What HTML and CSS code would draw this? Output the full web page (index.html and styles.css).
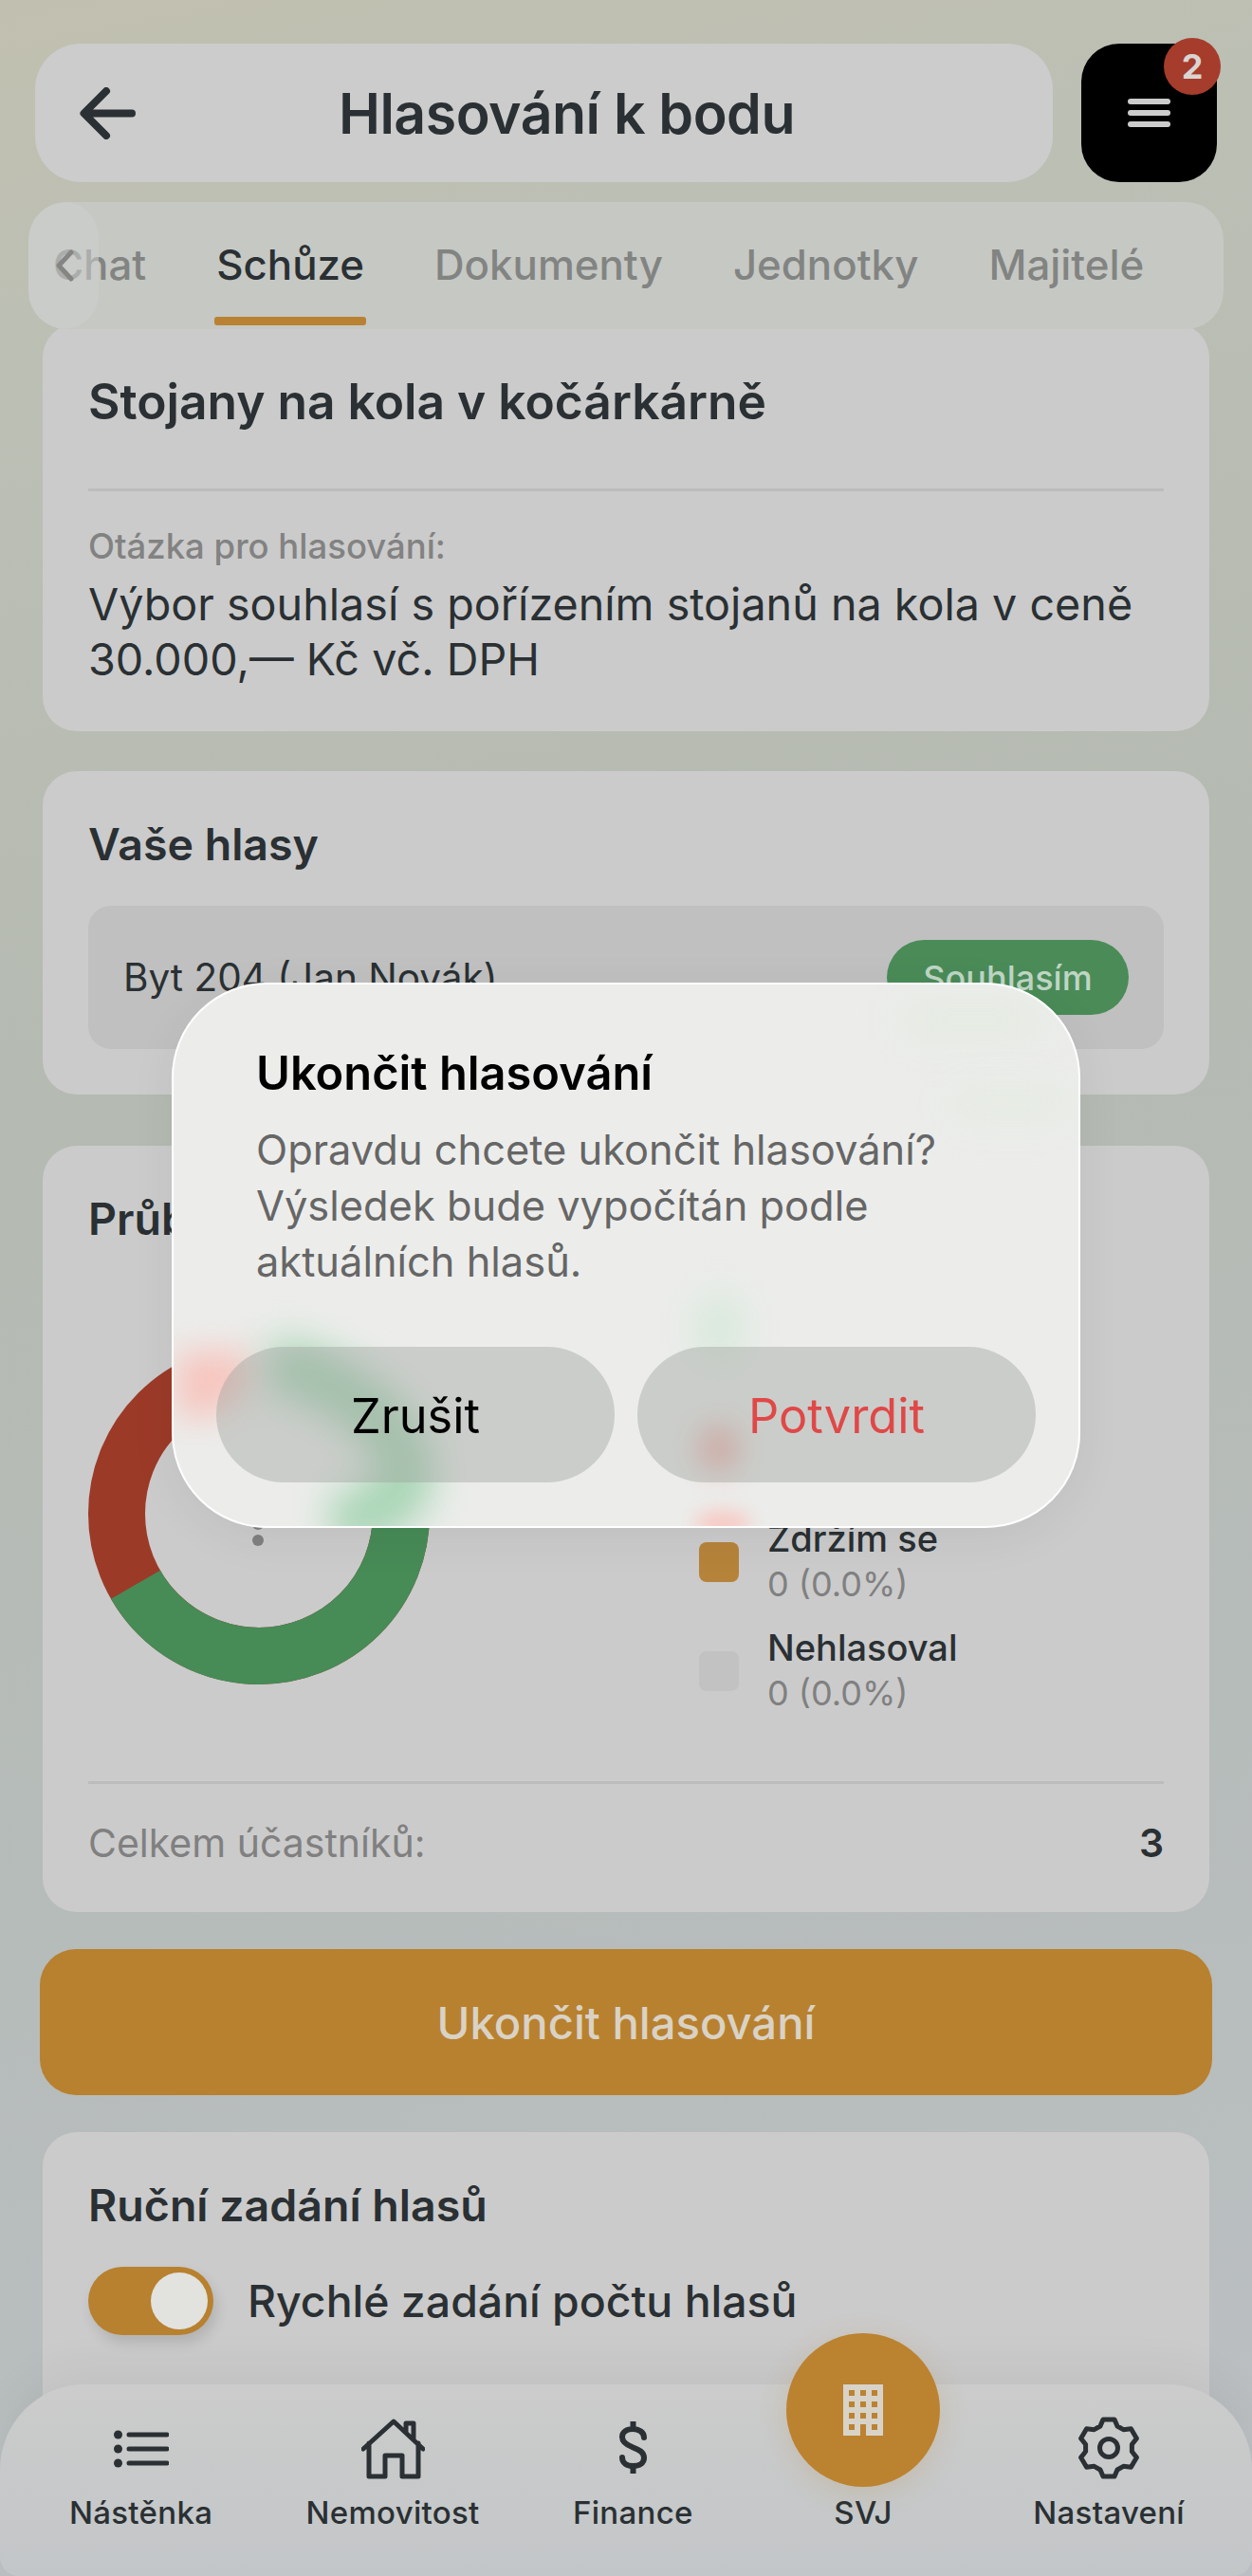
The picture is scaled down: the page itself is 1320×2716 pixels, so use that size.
FILE: index.html
```html
<!DOCTYPE html>
<html lang="cs">
<head>
    <meta charset="UTF-8">
    <meta name="viewport" content="width=device-width, initial-scale=1.0">
    <title>Hlasování k bodu</title>
    <link rel="stylesheet" href="styles.css">
</head>
<body>
<div class="screen">
    <header class="top-bar">
        <div class="title-pill">
            <svg class="back-icon" viewBox="0 0 59 55"><path d="M55 27.500H5M28 4 4.500 27.500 28 51"/></svg>
            <h1>Hlasování k bodu</h1>
        </div>
        <button class="menu-btn">
            <span class="menu-line"></span>
            <span class="menu-line"></span>
            <span class="menu-line"></span>
            <span class="badge">2</span>
        </button>
    </header>

    <nav class="tabs">
        <span class="tab">Chat</span>
        <span class="tab active">Schůze</span>
        <span class="tab">Dokumenty</span>
        <span class="tab">Jednotky</span>
        <span class="tab">Majitelé</span>
        <span class="tab-arrow">
            <svg viewBox="0 0 20 34"><path d="M17 3 4 17l13 14"/></svg>
        </span>
    </nav>

    <main class="content">
        <section class="card card-first">
            <h2 class="point-title">Stojany na kola v kočárkárně</h2>
            <hr class="divider">
            <p class="question-label">Otázka pro hlasování:</p>
            <p class="question">Výbor souhlasí s pořízením stojanů na kola v ceně 30.000,— Kč vč. DPH</p>
        </section>

        <section class="card">
            <h3>Vaše hlasy</h3>
            <div class="vote-row">
                <span>Byt 204 (Jan Novák)</span>
                <span class="vote-pill">Souhlasím</span>
            </div>
        </section>

        <section class="card">
            <h3>Průběžné výsledky</h3>
            <div class="chart-row">
                <div class="donut">
                    <svg viewBox="0 0 360 360">
                        <circle class="ring-red" cx="180" cy="180" r="150"/>
                        <circle class="ring-green" cx="180" cy="180" r="150"/>
                    </svg>
                    <div class="donut-center"><i></i><i></i></div>
                </div>
                <ul class="legend">
                    <li><span class="swatch green"></span><div><b>Souhlasím</b><small>2 (66.7%)</small></div></li>
                    <li><span class="swatch red"></span><div><b>Nesouhlasím</b><small>1 (33.3%)</small></div></li>
                    <li><span class="swatch amber"></span><div><b>Zdržím se</b><small>0 (0.0%)</small></div></li>
                    <li><span class="swatch grey"></span><div><b>Nehlasoval</b><small>0 (0.0%)</small></div></li>
                </ul>
            </div>
            <hr class="divider divider-total">
            <div class="total-row">
                <span>Celkem účastníků:</span>
                <strong>3</strong>
            </div>
        </section>

        <button class="end-btn">Ukončit hlasování</button>

        <section class="card card-last">
            <h3>Ruční zadání hlasů</h3>
            <div class="toggle-row">
                <span class="toggle"><span class="thumb"></span></span>
                <span>Rychlé zadání počtu hlasů</span>
            </div>
        </section>
    </main>

    <footer class="bottom-nav">
        <div class="nav-item">
            <svg class="ico ico-list" viewBox="0 0 58 40">
                <circle class="solid" cx="4.500" cy="5" r="4.500"/>
                <circle class="solid" cx="4.500" cy="20" r="4.500"/>
                <circle class="solid" cx="4.500" cy="35" r="4.500"/>
                <path d="M16 5h40M16 20h40M16 35h40"/>
            </svg>
            <span>Nástěnka</span>
        </div>
        <div class="nav-item">
            <svg class="ico ico-house" viewBox="0 0 67 64">
                <path d="M2 32 34 3l31 29M8 26v35h17V39h18v22h17V26M47 14V5h8v17"/>
            </svg>
            <span>Nemovitost</span>
        </div>
        <div class="nav-item">
            <svg class="ico ico-dollar" viewBox="0 0 31 55">
                <path d="M27 17C27 11 21 8 15.500 8 9 8 4 11 4 16.500 4 22 9 25 15.500 27.500 22 30 27 32.500 27 38.500 27 44 22 47 15.500 47 9 47 4 44 4 38M15.500 1v7M15.500 47v7"/>
            </svg>
            <span>Finance</span>
        </div>
        <div class="nav-item nav-main">
            <div class="main-circle">
                <svg class="ico-building" viewBox="0 0 42 54">
                    <path class="bld" d="M0 0h42v54H0z"/>
                    <path class="win" d="M6 6h6v6H6zM18 6h6v6h-6zM30 6h6v6h-6zM6 18h6v6H6zM18 18h6v6h-6zM30 18h6v6h-6zM6 30h6v6H6zM18 30h6v6h-6zM30 30h6v6h-6zM6 42h6v6H6zM30 42h6v6h-6zM18 42h6v12h-6z"/>
                </svg>
            </div>
            <span>SVJ</span>
        </div>
        <div class="nav-item">
            <svg class="ico ico-gear" viewBox="0 0 64 66">
                <path d="M23 10 26 3H38L41 10 47.400 13.700 55.400 12.700 61.400 22.900 56.400 29.300V36.700L61.400 43.100 55.400 53.300 47.400 52.300 41 56 38 63H26L23 56 16.600 52.300 8.600 53.300 2.600 43.100 7.600 36.700V29.300L2.600 22.900 8.600 12.700 16.600 13.700Z"/>
                <circle cx="32" cy="33" r="9.500"/>
            </svg>
            <span>Nastavení</span>
        </div>
    </footer>

    <div class="modal">
        <svg class="modal-blur" viewBox="181 1036 958 575">
            <path class="blur-red" d="M186 1425h78v36l-40 34h-38z"/>
            <path class="blur-green" d="M285 1440C345 1445 425 1500 428 1550 430 1580 400 1598 350 1606"/>
            <ellipse class="blur-soft-green" cx="758" cy="1400" rx="24" ry="36"/>
            <ellipse class="blur-soft-red" cx="758" cy="1527" rx="20" ry="24"/>
            <ellipse class="blur-soft-red2" cx="762" cy="1606" rx="30" ry="12"/>
            <rect class="blur-soft-pill" x="950" y="1056" width="150" height="40"/>
            <rect class="blur-soft-pill" x="1000" y="1146" width="130" height="34"/>
        </svg>
        <h4>Ukončit hlasování</h4>
        <p>Opravdu chcete ukončit hlasování? Výsledek bude vypočítán podle aktuálních hlasů.</p>
        <div class="modal-actions">
            <button class="modal-btn">Zrušit</button>
            <button class="modal-btn confirm">Potvrdit</button>
        </div>
    </div>
</div>
</body>
</html>
```

FILE: styles.css
```css
* {
    box-sizing: border-box;
}
body {
    margin: 0;
    font-family: Inter, "Noto Sans", sans-serif;
    color: #2a3033;
}
.screen {
    position: relative;
    width: 1320px;
    height: 2716px;
    overflow: hidden;
    background: linear-gradient(168deg, #c1c0b0 0%, #bbbfb4 14%, #b5bab2 40%, #b6bcba 70%, #bbbfc3 100%);
}
button {
    font-family: inherit;
    border: none;
}

/* top bar */
.top-bar {
    display: flex;
    gap: 30px;
    padding: 46px 37px 0 37px;
}
.title-pill {
    position: relative;
    flex: 1;
    height: 146px;
    display: flex;
    align-items: center;
    justify-content: center;
    background: #cbcccb;
    border-radius: 48px;
}
.title-pill h1 {
    margin: 0 0 0 48px;
    font-size: 59px;
    font-weight: 600;
    letter-spacing: -0.5px;
}
.back-icon {
    position: absolute;
    left: 47px;
    top: 46px;
    width: 59px;
    height: 55px;
    fill: none;
    stroke: #2a3033;
    stroke-width: 8;
    stroke-linecap: round;
    stroke-linejoin: round;
}
.menu-btn {
    position: relative;
    width: 143px;
    height: 146px;
    padding: 0;
    background: #000;
    border-radius: 40px;
    display: flex;
    flex-direction: column;
    align-items: center;
    justify-content: center;
    gap: 6px;
}
.menu-line {
    width: 45px;
    height: 6px;
    border-radius: 3px;
    background: #ccc;
}
.badge {
    position: absolute;
    top: -6px;
    right: -4px;
    width: 60px;
    height: 60px;
    border-radius: 50%;
    background: #a63c2c;
    color: #d9d5d2;
    font-size: 36px;
    font-weight: 700;
    line-height: 60px;
    text-align: center;
}

/* tabs */
.tabs {
    position: relative;
    z-index: 2;
    display: flex;
    gap: 74px;
    height: 134px;
    margin: 21px 30px 0;
    padding-left: 26px;
    background: #c6c8c4;
    border-radius: 40px;
    overflow: hidden;
}
.tab {
    position: relative;
    padding-top: 41px;
    font-size: 43.800px;
    line-height: 52px;
    font-weight: 500;
    color: #828482;
    white-space: nowrap;
}
.tab.active {
    color: #2a3033;
}
.tab.active::after {
    content: "";
    position: absolute;
    left: -2px;
    right: -2px;
    top: 121px;
    height: 9px;
    border-radius: 3px;
    background: #b98233;
}
.tab-arrow {
    position: absolute;
    left: 0;
    top: 0;
    width: 74px;
    height: 134px;
    border-radius: 40px;
    background: rgba(206, 207, 205, 0.55);
}
.tab-arrow svg {
    position: absolute;
    left: 28px;
    top: 50px;
    width: 20px;
    height: 34px;
    fill: none;
    stroke: #858684;
    stroke-width: 5;
    stroke-linecap: round;
    stroke-linejoin: round;
}

/* cards */
.content {
    display: flex;
    flex-direction: column;
    padding: 0 45px;
    margin-top: -6px;
}
.card {
    background: #cbcbcb;
    border-radius: 36px;
    padding: 49px 48px 48px;
    margin-top: 42px;
}
.card + .card {
    margin-top: 54px;
}
.card.card-first {
    margin-top: 0;
    padding: 52px 48px 47px;
}
.card-first + .card {
    margin-top: 42px;
}
.point-title {
    margin: 0;
    font-size: 51.500px;
    line-height: 60px;
    font-weight: 600;
}
.card h3 {
    margin: 0;
    font-size: 46.500px;
    line-height: 56px;
    font-weight: 600;
}
.divider {
    height: 3px;
    margin: 62px 0 0;
    border: none;
    background: #bcbcbc;
}
.question-label {
    margin: 37px 0 0;
    font-size: 36.500px;
    line-height: 42px;
    font-weight: 500;
    color: #828282;
}
.question {
    margin: 11px 0 0;
    font-size: 46.700px;
    line-height: 58px;
}
.vote-row {
    display: flex;
    align-items: center;
    justify-content: space-between;
    height: 151px;
    margin-top: 37px;
    padding: 0 37px;
    background: #c0c0c0;
    border-radius: 24px;
    font-size: 40.500px;
}
.vote-pill {
    display: flex;
    align-items: center;
    justify-content: center;
    width: 255px;
    height: 79px;
    border-radius: 40px;
    background: #4a8b58;
    color: #bfd6c4;
    font-size: 36px;
    font-weight: 500;
}

/* chart */
.chart-row {
    display: flex;
    align-items: flex-start;
    justify-content: space-between;
    margin-top: 56px;
}
.donut {
    position: relative;
    width: 360px;
    height: 360px;
    margin-top: 47px;
}
.donut svg {
    display: block;
    width: 360px;
    height: 360px;
    fill: none;
    stroke-width: 60;
}
.ring-red {
    stroke: #9c3a28;
}
.ring-green {
    stroke: #478b57;
    stroke-dasharray: 628.32 942.48;
    transform: rotate(-90deg);
    transform-origin: center;
}
.donut-center {
    position: absolute;
    left: 173px;
    top: 185px;
    display: flex;
    flex-direction: column;
    gap: 5px;
}
.donut-center i {
    width: 12px;
    height: 12px;
    border-radius: 50%;
    background: #808080;
}
.legend {
    list-style: none;
    margin: 0;
    padding: 0;
    width: 490px;
    display: flex;
    flex-direction: column;
    gap: 19px;
}
.legend li {
    display: flex;
    align-items: center;
    gap: 30px;
}
.legend b {
    display: block;
    font-size: 38px;
    line-height: 46px;
    font-weight: 500;
}
.legend small {
    display: block;
    font-size: 36px;
    line-height: 50px;
    color: #808080;
}
.swatch {
    width: 42px;
    height: 42px;
    border-radius: 8px;
}
.swatch.green { background: #478b57; }
.swatch.red { background: #9c3a28; }
.swatch.amber { background: #b6833a; }
.swatch.grey { background: #c2c2c2; }
.divider-total {
    margin-top: 68px;
}
.total-row {
    display: flex;
    justify-content: space-between;
    margin-top: 37px;
    font-size: 41px;
    line-height: 50px;
}
.total-row span {
    color: #808080;
}
.total-row strong {
    font-weight: 600;
}

.end-btn {
    height: 154px;
    margin: 39px -3px 0;
    border-radius: 38px;
    background: #b8812f;
    color: #d9d2c5;
    font-size: 47.200px;
    font-weight: 500;
}
.end-btn + .card {
    margin-top: 39px;
}
.card.card-last {
    padding-bottom: 300px;
}
.toggle-row {
    display: flex;
    align-items: center;
    gap: 36px;
    margin-top: 37px;
    font-size: 46.400px;
    font-weight: 500;
}
.toggle {
    position: relative;
    width: 132px;
    height: 72px;
    border-radius: 36px;
    background: #b8812f;
    box-shadow: 4px 8px 14px rgba(0, 0, 0, 0.12);
}
.thumb {
    position: absolute;
    right: 6px;
    top: 6px;
    width: 60px;
    height: 60px;
    border-radius: 50%;
    background: #e2e2df;
}

/* bottom nav */
.bottom-nav {
    position: absolute;
    left: 0;
    right: 0;
    bottom: 0;
    height: 202px;
    display: flex;
    justify-content: space-between;
    padding: 0 71px 0 73px;
    background: linear-gradient(180deg, #cbcccb 0%, #c3c6c8 100%);
    border-radius: 90px 90px 20px 20px;
    box-shadow: 0 -24px 40px rgba(0, 0, 0, 0.04);
}
.nav-item {
    display: flex;
    flex-direction: column;
    align-items: center;
    justify-content: flex-end;
    height: 155px;
    font-size: 33px;
    line-height: 40px;
    font-weight: 500;
    letter-spacing: 0.3px;
}
.nav-item span {
    margin-top: 15px;
}
.nav-main {
    position: relative;
    width: 162px;
}
.ico {
    display: block;
    fill: none;
    stroke: #2a3033;
    stroke-width: 5;
    stroke-linecap: round;
    stroke-linejoin: round;
}
.ico .solid {
    fill: #2a3033;
    stroke: none;
}
.ico-list {
    width: 58px;
    height: 40px;
    margin-bottom: 12px;
}
.ico-house {
    width: 67px;
    height: 64px;
}
.ico-dollar {
    width: 31px;
    height: 55px;
    margin-bottom: 6px;
    stroke-width: 6;
}
.ico-gear {
    width: 64px;
    height: 66px;
}
.main-circle {
    position: absolute;
    left: 0;
    top: -54px;
    width: 162px;
    height: 162px;
    border-radius: 50%;
    background: #bb8230;
    box-shadow: 0 6px 30px rgba(187, 130, 48, 0.2);
    display: flex;
    align-items: center;
    justify-content: center;
}
.ico-building {
    width: 42px;
    height: 54px;
}
.bld { fill: #d8d3c8; }
.win { fill: #bb8230; }

/* modal */
.modal {
    position: absolute;
    left: 181px;
    top: 1036px;
    width: 958px;
    height: 575px;
    padding: 64px 45px 0;
    background: #ecedeb;
    border: 2px solid #fff;
    border-radius: 100px;
    box-shadow: 0 10px 50px rgba(0, 0, 0, 0.06);
    overflow: hidden;
}
.modal-blur {
    position: absolute;
    left: -2px;
    top: -2px;
    width: 958px;
    height: 575px;
    fill: none;
}
.blur-red {
    fill: #f7c4bd;
    filter: blur(18px);
}
.blur-green {
    stroke: #a6d4b3;
    stroke-width: 58;
    filter: blur(20px);
}
.blur-soft-green {
    fill: #d4e8d8;
    filter: blur(20px);
}
.blur-soft-red {
    fill: #f0aaa3;
    filter: blur(16px);
}
.blur-soft-red2 {
    fill: #f9c4bd;
    filter: blur(10px);
}
.blur-soft-pill {
    fill: #e4ebe1;
    filter: blur(20px);
}
.modal h4,
.modal p,
.modal-actions {
    position: relative;
}
.modal h4 {
    margin: 0 42px;
    font-size: 48.800px;
    line-height: 60px;
    font-weight: 600;
    color: #000;
}
.modal p {
    margin: 21px 42px 0;
    font-size: 43.400px;
    line-height: 59px;
    color: #666;
}
.modal-actions {
    display: flex;
    gap: 24px;
    margin-top: 60px;
}
.modal-btn {
    flex: 1;
    height: 143px;
    padding-top: 2px;
    border-radius: 72px;
    background: rgba(158, 162, 158, 0.42);
    color: #000;
    font-size: 50.500px;
    font-weight: 400;
}
.modal-btn.confirm {
    color: #e04848;
}
```
